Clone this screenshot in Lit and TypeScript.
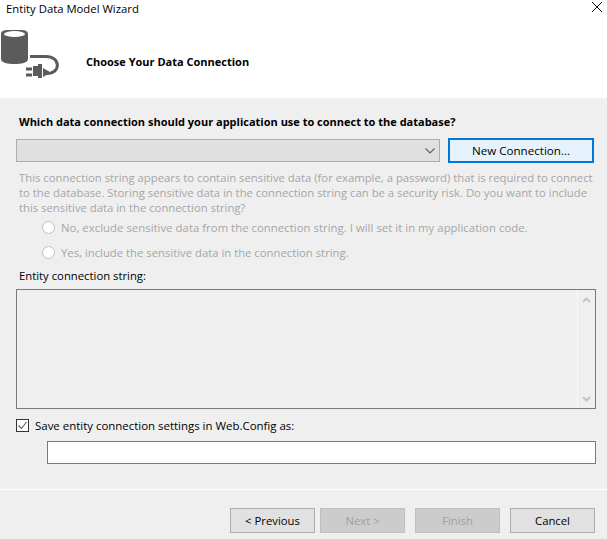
import { LitElement, html, css } from "lit";
import { customElement } from "lit/decorators.js";

@customElement("app-root")
export class AppRoot extends LitElement {
  static styles = css`
    :host {
      display: block;
      width: 607px;
      height: 539px;
      overflow: hidden;
      font-family: "Open Sans", "Noto Sans", sans-serif;
      font-size: 11.3px;
      color: #000;
      background: #efefef;
    }
    .header { height: 98px; background: #fff; box-sizing: border-box; }
    .titlebar { display: flex; justify-content: space-between; height: 25px; padding: 0 0 0 6px; }
    .title { line-height: 17px; }
    .close { margin: 1px 4px 0 0; width: 12px; height: 12px; }
    .banner { display: flex; align-items: flex-start; }
    .logo { width: 62px; height: 56px; display: block; }
    .heading { margin: 28px 0 0 24px; font-weight: 700; line-height: 18px; font-size: 11px; }
    .body { padding: 15px 11px 0 16px; }
    .question { padding-left: 3px; font-weight: 700; line-height: 18px; font-size: 11px; }
    .connrow { display: flex; gap: 8px; margin-top: 7px; align-items: center; padding-right: 2px; }
    .combo { box-sizing: border-box; flex: none; width: 424px; height: 23px; border: 1px solid #adadad; background: #e0e0e0; display: flex; justify-content: flex-end; align-items: center; padding-right: 2px; }
    .combo svg { width: 12px; height: 8px; margin-right: 1px; }
    .btn { box-sizing: border-box; width: 85px; height: 25px; border: 1px solid #adadad; background: #e1e1e1; text-align: center; line-height: 23px; }
    .btn.primary { width: 146px; border: 2px solid #0078d7; background: #e5f1fb; line-height: 21px; font-size: 11.6px; }
    .btn.off { background: #cccccc; color: #a0a0a0; border-color: #bfbfbf; }
    .note { margin-top: 7px; padding-left: 3px; color: #a6a6a6; line-height: 15px; white-space: nowrap; }
    .radio { display: flex; align-items: center; gap: 6px; height: 25px; padding-left: 26px; color: #a6a6a6; white-space: nowrap; }
    .radio i { display: block; box-sizing: border-box; width: 13px; height: 13px; border-radius: 50%; border: 1px solid #c0c0c0; background: #fff; }
    .radio .wide { letter-spacing: 0.05px; }
    .label { padding-left: 3px; margin-top: 2px; line-height: 18px; }
    .area { box-sizing: border-box; margin-top: 4px; height: 120px; border: 1px solid #7a7a7a; display: flex; justify-content: flex-end; }
    .scroll { box-sizing: border-box; width: 18px; border-left: 1px solid #fafafa; display: flex; flex-direction: column; justify-content: space-between; align-items: center; padding: 7px 0 6px; }
    .scroll svg { width: 9px; height: 6px; display: block; }
    .save { display: flex; align-items: center; gap: 6px; margin-top: 7px; height: 18px; font-size: 11.45px; }
    .check { box-sizing: border-box; width: 13px; height: 13px; border: 1px solid #333; background: #fff; display: flex; }
    .check svg { width: 11px; height: 11px; }
    .field { box-sizing: border-box; margin: 7px 0 0 31px; height: 23px; border: 1px solid #7a7a7a; background: #fff; }
    .rule { height: 1px; background: #fff; margin-top: 25px; }
    .footer { display: flex; justify-content: flex-end; padding: 18px 12px 0 0; }
    .footer .btn + .btn { margin-left: 10px; }
    .footer .btn:nth-child(2) { margin-left: 5px; }
  `;

  render() {
    return html`
      <div class="header">
        <div class="titlebar">
          <span class="title">Entity Data Model Wizard</span>
          <svg class="close" viewBox="0 0 12 12"><path d="M1 1l10 10M11 1L1 11" stroke="#111" stroke-width="1" fill="none"/></svg>
        </div>
        <div class="banner">
          <svg class="logo" viewBox="0 0 62 56">
            <path d="M1 9C1 4 8 5 14.500 5S28 4 28 9v25c0 4-7 5-13.500 5S1 38 1 34z" fill="#5b5b5b"/>
            <ellipse cx="14.500" cy="9" rx="10.500" ry="3" fill="#fff"/>
            <path d="M30 31.500h16c15 0 15 17 1 17h-3" fill="none" stroke="#5b5b5b" stroke-width="3"/>
            <path d="M33 41h5v-2h4v14h-4v-2h-5z" fill="#5b5b5b"/>
            <path d="M26 42.500h6v3h-6zM26 48.500h6v3h-6zM43 43l6 3.500v2L43 52z" fill="#5b5b5b"/>
          </svg>
          <div class="heading">Choose Your Data Connection</div>
        </div>
      </div>
      <div class="body">
        <div class="question">Which data connection should your application use to connect to the database?</div>
        <div class="connrow">
          <div class="combo">
            <svg viewBox="0 0 12 8"><path d="M1.500 1.500L6 6l4.500-4.500" fill="none" stroke="#606060" stroke-width="1.100"/></svg>
          </div>
          <div class="btn primary">New Connection...</div>
        </div>
        <div class="note">This connection string appears to contain sensitive data (for example, a password) that is required to connect<br>to the database. Storing sensitive data in the connection string can be a security risk. Do you want to include<br>this sensitive data in the connection string?</div>
        <div class="radios">
          <div class="radio"><i></i><span class="wide">No, exclude sensitive data from the connection string. I will set it in my application code.</span></div>
          <div class="radio"><i></i><span>Yes, include the sensitive data in the connection string.</span></div>
        </div>
        <div class="label">Entity connection string:</div>
        <div class="area">
          <div class="scroll">
            <svg viewBox="0 0 9 6"><path d="M1 5l3.500-3.500L8 5" fill="none" stroke="#c4c4c4" stroke-width="2"/></svg>
            <svg viewBox="0 0 9 6"><path d="M1 1l3.500 3.500L8 1" fill="none" stroke="#c4c4c4" stroke-width="2"/></svg>
          </div>
        </div>
        <div class="save">
          <div class="check"><svg viewBox="0 0 11 11"><path d="M1.500 5.500l3 3L9.500 2" fill="none" stroke="#555" stroke-width="1.100"/></svg></div>
          <span>Save entity connection settings in Web.Config as:</span>
        </div>
        <div class="field"></div>
      </div>
      <div class="rule"></div>
      <div class="footer">
        <div class="btn">&lt; Previous</div>
        <div class="btn off">Next &gt;</div>
        <div class="btn off">Finish</div>
        <div class="btn">Cancel</div>
      </div>
    `;
  }
}
